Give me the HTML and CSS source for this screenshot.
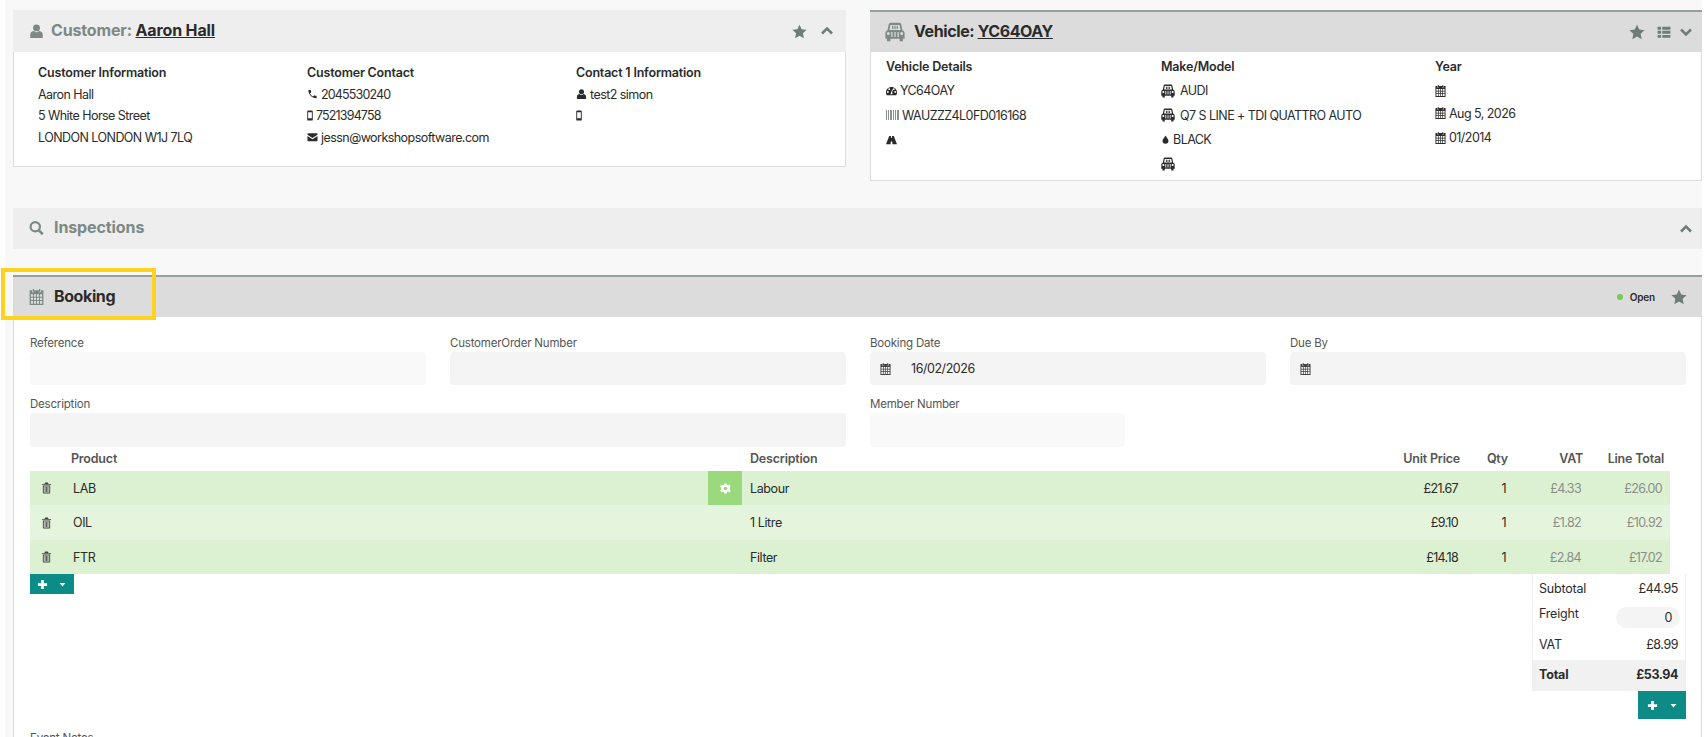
FILE: index.html
```html
<!DOCTYPE html>
<html lang="en">

<head>
    <meta charset="UTF-8">
    <title>Booking</title>
    <link rel="stylesheet" href="styles.css">
</head>

<body>
    <svg class="sprite" width="0" height="0">
        <symbol id="i-user" viewBox="0 0 24 24"><circle cx="12" cy="7" r="5.500" /><path d="M2 23v-5c0-4 3-6 6-6 1 1 2.500 2 4 2s3-1 4-2c3 0 6 2 6 6v5z" /></symbol>
        <symbol id="i-star" viewBox="0 0 24 24"><path d="M12 1l3.400 7.300 7.900 1-5.800 5.500 1.500 7.900-7-3.900-7 3.900 1.500-7.900L.7 9.300l7.900-1z" /></symbol>
        <symbol id="i-up" viewBox="0 0 24 24"><path d="M2 17l10-10 10 10" fill="none" stroke="currentColor" stroke-width="5" /></symbol>
        <symbol id="i-down" viewBox="0 0 24 24"><path d="M2 7l10 10 10-10" fill="none" stroke="currentColor" stroke-width="5" /></symbol>
        <symbol id="i-search" viewBox="0 0 24 24"><circle cx="10" cy="10" r="7.500" fill="none" stroke="currentColor" stroke-width="3.500" /><path d="M15 15l7 7" stroke="currentColor" stroke-width="4" /></symbol>
        <symbol id="i-cal" viewBox="0 0 24 24" preserveAspectRatio="none"><path d="M6 0h2v4H6zM16 0h2v4h-2zM1 2h4v3h3V2h8v3h3V2h4v22H1zM3 8v3.500h3.500V8zm5 0v3.500h3.250V8zm4.750 0v3.500H16V8zm4.750 0v3.500H21V8zM3 13v3.500h3.500V13zm5 0v3.500h3.250V13zm4.750 0v3.500H16V13zm4.750 0v3.500H21V13zM3 18v4h3.500v-4zm5 0v4h3.250v-4zm4.750 0v4H16v-4zm4.750 0v4H21v-4z" fill-rule="evenodd" /></symbol>
        <symbol id="i-phone" viewBox="0 0 24 24"><path d="M6.600 10.800c1.400 2.800 3.800 5.100 6.600 6.600l2.200-2.200c.3-.3.700-.4 1-.2 1.100.4 2.300.6 3.600.6.600 0 1 .4 1 1V20c0 .6-.4 1-1 1C10.600 21 3 13.400 3 4c0-.6.4-1 1-1h3.500c.6 0 1 .4 1 1 0 1.300.2 2.500.6 3.600.1.300 0 .7-.2 1z" /></symbol>
        <symbol id="i-mobile" viewBox="6 0 12 24"><path d="M8 1h8a2 2 0 0 1 2 2v18a2 2 0 0 1-2 2H8a2 2 0 0 1-2-2V3a2 2 0 0 1 2-2zm0 4v13h8V5z" fill-rule="evenodd" /></symbol>
        <symbol id="i-mail" viewBox="0 0 24 24"><path d="M1 6a2 2 0 0 1 2-2h18a2 2 0 0 1 2 2v1l-11 7L1 7zM1 10l11 7 11-7v9a2 2 0 0 1-2 2H3a2 2 0 0 1-2-2z" /></symbol>
        <symbol id="i-car" viewBox="0 0 24 24"><path d="M7 1h10c1.200 0 2.200.8 2.500 2L21 10c1.500.5 2.500 2 2.500 3.500V20h-2v3h-4v-3h-11v3h-4v-3h-2v-6.500C.5 12 1.500 10.500 3 10l1.500-7C4.800 1.800 5.800 1 7 1zm-.5 2.500L5.300 9.500h13.400l-1.200-6zM4 12a1.800 1.800 0 1 0 0 3.600A1.800 1.800 0 0 0 4 12zm16 0a1.800 1.800 0 1 0 0 3.600 1.800 1.800 0 0 0 0-3.600zM7.500 12v6H9v-6zm3.750 0v6h1.500v-6zm3.750 0v6h1.500v-6zM8.500 4.500h1.500v4H8.500zm2.750 0h1.500v4h-1.500zm2.750 0h1.500v4H14z" fill-rule="evenodd" /></symbol>
        <symbol id="i-gauge" viewBox="0 0 24 24"><path d="M12 3C5.400 3 0 8.400 0 15c0 2.200.6 4.300 1.700 6h20.600c1.100-1.700 1.700-3.800 1.700-6 0-6.600-5.400-12-12-12zM4 16a2 2 0 1 1 0-4 2 2 0 0 1 0 4zm3-6a2 2 0 1 1 0-4 2 2 0 0 1 0 4zm7 9h-4l1-4 3-7 1 1-1.500 6.500c.5.800.5 2 .5 3.500zm3-9a2 2 0 1 1 0-4 2 2 0 0 1 0 4zm3 6a2 2 0 1 1 0-4 2 2 0 0 1 0 4z" fill-rule="evenodd" /></symbol>
        <symbol id="i-barcode" viewBox="0 0 13 12"><path d="M0 1h1v10H0zM2 1h1v10H2zM4 1h2v10H4zM7 1h1v10H7zM9 1h1v10H9zM11 1h2v10h-2z" /></symbol>
        <symbol id="i-road" viewBox="0 0 24 24"><path d="M7 3h4l-.3 4h2.600L13 3h4l7 18H14l-.4-6h-3.200L10 21H0z" /></symbol>
        <symbol id="i-tint" viewBox="0 0 24 24"><path d="M12 1c2 5 8 9 8 14.500A8 8 0 0 1 4 15.500C4 10 10 6 12 1z" /></symbol>
        <symbol id="i-trash" viewBox="0 0 24 24"><path d="M9 0h6l1.500 3H22v2H2V3h5.500zM4 6.500h16V22a2 2 0 0 1-2 2H6a2 2 0 0 1-2-2zM6 8.500V22h12V8.500zM8 10h1.800v10.500H8zm3.100 0h1.800v10.500h-1.800zm3.100 0H16v10.500h-1.800z" fill-rule="evenodd" /></symbol>
        <symbol id="i-cog" viewBox="0 0 24 24"><path d="M9.500 1h5l.7 3.500 2.300 1 3-2 3 4-2.500 2.500.5 2-.5 2 2.500 2.500-3 4-3-2-2.300 1-.7 3.500h-5l-.7-3.500-2.300-1-3 2-3-4L2.500 14 2 12l.5-2L0 7.500l3-4 3 2 2.800-1zM12 8a4 4 0 1 0 0 8 4 4 0 0 0 0-8z" fill-rule="evenodd" /></symbol>
        <symbol id="i-plus" viewBox="0 0 24 24"><path d="M9 2h6v7h7v6h-7v7H9v-7H2V9h7z" /></symbol>
        <symbol id="i-caret" viewBox="0 0 24 24"><path d="M4 8h16l-8 9z" /></symbol>
        <symbol id="i-list" viewBox="0 0 24 24"><path d="M1 3h6v5H1zM9 3h14v5H9zM1 10h6v5H1zM9 10h14v5H9zM1 17h6v5H1zM9 17h14v5H9z" /></symbol>
    </svg>

    <div class="page">
        <div class="top">
            <section class="panel customer">
                <div class="head">
                    <svg class="ic-head"><use href="#i-user" /></svg>
                    <h2>Customer: <a>Aaron Hall</a></h2>
                    <div class="tools">
                        <svg class="ic-star"><use href="#i-star" /></svg>
                        <svg class="ic-chev"><use href="#i-up" /></svg>
                    </div>
                </div>
                <div class="body cols">
                    <ul>
                        <li class="title">Customer Information</li>
                        <li>Aaron Hall</li>
                        <li>5 White Horse Street</li>
                        <li>LONDON LONDON W1J 7LQ</li>
                    </ul>
                    <ul>
                        <li class="title">Customer Contact</li>
                        <li class="tel"><svg class="ic"><use href="#i-phone" /></svg>2045530240</li>
                        <li class="tel"><svg class="ic thin"><use href="#i-mobile" /></svg>7521394758</li>
                        <li><svg class="ic"><use href="#i-mail" /></svg>jessn@workshopsoftware.com</li>
                    </ul>
                    <ul>
                        <li class="title">Contact 1 Information</li>
                        <li><svg class="ic"><use href="#i-user" /></svg>test2 simon</li>
                        <li><svg class="ic thin"><use href="#i-mobile" /></svg></li>
                    </ul>
                </div>
            </section>

            <section class="panel active vehicle">
                <div class="head">
                    <svg class="ic-car"><use href="#i-car" /></svg>
                    <h2>Vehicle: <a>YC64OAY</a></h2>
                    <div class="tools">
                        <svg class="ic-star"><use href="#i-star" /></svg>
                        <svg class="ic-list"><use href="#i-list" /></svg>
                        <svg class="ic-chev"><use href="#i-down" /></svg>
                    </div>
                </div>
                <div class="body cols">
                    <ul>
                        <li class="title">Vehicle Details</li>
                        <li><svg class="ic"><use href="#i-gauge" /></svg>YC64OAY</li>
                        <li><svg class="ic bar"><use href="#i-barcode" /></svg>WAUZZZ4L0FD016168</li>
                        <li><svg class="ic"><use href="#i-road" /></svg></li>
                    </ul>
                    <ul>
                        <li class="title">Make/Model</li>
                        <li><svg class="ic wide"><use href="#i-car" /></svg>AUDI</li>
                        <li><svg class="ic wide"><use href="#i-car" /></svg>Q7 S LINE + TDI QUATTRO AUTO</li>
                        <li><svg class="ic small"><use href="#i-tint" /></svg>BLACK</li>
                        <li><svg class="ic wide"><use href="#i-car" /></svg></li>
                    </ul>
                    <ul class="year">
                        <li class="title">Year</li>
                        <li><svg class="ic"><use href="#i-cal" /></svg></li>
                        <li><svg class="ic"><use href="#i-cal" /></svg>Aug 5, 2026</li>
                        <li><svg class="ic"><use href="#i-cal" /></svg>01/2014</li>
                    </ul>
                </div>
            </section>
        </div>

        <section class="panel inspections">
            <div class="head">
                <svg class="ic-head"><use href="#i-search" /></svg>
                <h2>Inspections</h2>
                <div class="tools">
                    <svg class="ic-chev"><use href="#i-up" /></svg>
                </div>
            </div>
        </section>

        <section class="panel active booking">
            <div class="head">
                <svg class="ic-head"><use href="#i-cal" /></svg>
                <h2>Booking</h2>
                <div class="tools">
                    <span class="dot"></span>
                    <span class="status">Open</span>
                    <svg class="ic-star"><use href="#i-star" /></svg>
                </div>
                <div class="highlight"></div>
            </div>
            <div class="body form">
                <div class="fields">
                    <div class="field">
                        <label>Reference</label>
                        <div class="input light"></div>
                    </div>
                    <div class="field">
                        <label>CustomerOrder Number</label>
                        <div class="input"></div>
                    </div>
                    <div class="field">
                        <label>Booking Date</label>
                        <div class="input"><svg class="ic"><use href="#i-cal" /></svg><span class="date">16/02/2026</span></div>
                    </div>
                    <div class="field">
                        <label>Due By</label>
                        <div class="input"><svg class="ic"><use href="#i-cal" /></svg></div>
                    </div>
                    <div class="field span2">
                        <label>Description</label>
                        <div class="input"></div>
                    </div>
                    <div class="field member">
                        <label>Member Number</label>
                        <div class="input light"></div>
                    </div>
                </div>

                <div class="lines">
                    <div class="line line-head">
                        <span></span>
                        <span class="prod">Product</span>
                        <span class="desc">Description</span>
                        <span class="num">Unit Price</span>
                        <span class="num">Qty</span>
                        <span class="num">VAT</span>
                        <span class="num">Line Total</span>
                    </div>
                    <div class="line row">
                        <span class="del"><svg><use href="#i-trash" /></svg></span>
                        <span class="prod">LAB<i class="gear"><svg><use href="#i-cog" /></svg></i></span>
                        <span class="desc">Labour</span>
                        <span class="num">£21.67</span>
                        <span class="num">1</span>
                        <span class="num grey">£4.33</span>
                        <span class="num grey">£26.00</span>
                    </div>
                    <div class="line row alt">
                        <span class="del"><svg><use href="#i-trash" /></svg></span>
                        <span class="prod">OIL</span>
                        <span class="desc">1 Litre</span>
                        <span class="num">£9.10</span>
                        <span class="num">1</span>
                        <span class="num grey">£1.82</span>
                        <span class="num grey">£10.92</span>
                    </div>
                    <div class="line row">
                        <span class="del"><svg><use href="#i-trash" /></svg></span>
                        <span class="prod">FTR</span>
                        <span class="desc">Filter</span>
                        <span class="num">£14.18</span>
                        <span class="num">1</span>
                        <span class="num grey">£2.84</span>
                        <span class="num grey">£17.02</span>
                    </div>
                </div>

                <div class="under">
                    <button class="add small"><svg class="plus"><use href="#i-plus" /></svg><svg class="caret"><use href="#i-caret" /></svg></button>
                    <div class="summary">
                        <div class="totals">
                            <div class="t-row sub"><span>Subtotal</span><span>£44.95</span></div>
                            <div class="t-row freight"><span>Freight</span><span class="pill">0</span></div>
                            <div class="t-row vat"><span>VAT</span><span>£8.99</span></div>
                            <div class="t-row total"><span>Total</span><span>£53.94</span></div>
                        </div>
                        <button class="add big"><svg class="plus"><use href="#i-plus" /></svg><svg class="caret"><use href="#i-caret" /></svg></button>
                    </div>
                </div>

                <label class="notes">Event Notes</label>
            </div>
        </section>
    </div>
</body>

</html>
```

FILE: styles.css
```css
* {
    margin: 0;
    padding: 0;
    list-style: none;
    box-sizing: border-box;
}

html,
body {
    height: 737px;
    overflow: hidden;
}

body {
    background-color: #fff;
    font-family: "Inter", "Liberation Sans", sans-serif;
    font-size: 12.5px;
    letter-spacing: -0.2px;
    color: #2b2b2b;
}

svg {
    fill: currentColor;
}

.sprite {
    position: absolute;
}

.page {
    height: 737px;
    margin: 0 3px 0 5px;
    padding: 10px 0 0 8px;
    background-color: #f8f8f8;
}

.top {
    display: grid;
    grid-template-columns: 833px 832px;
    column-gap: 24px;
    align-items: start;
}

.panel {
    background-color: #fff;
}

.head {
    position: relative;
    display: flex;
    align-items: center;
    height: 42px;
    padding-left: 16px;
    background-color: #eee;
    color: #7c8985;
}

.head h2 {
    margin: 0 0 2px 10px;
    font-size: 16px;
    font-weight: 700;
    letter-spacing: -0.4px;
    white-space: pre;
}

.head a {
    color: #2b2b2b;
    text-decoration: underline;
}

.active .head {
    border-top: 2px solid #95a29c;
    background-color: #dcdcdc;
}

.active .head h2 {
    color: #2b2b2b;
}

.tools {
    display: flex;
    align-items: center;
    margin-left: auto;
    color: #6f7c78;
}

.ic-head {
    width: 15px;
    height: 16px;
    margin-bottom: 1px;
}

.ic-car {
    width: 20px;
    height: 20px;
}

.ic-star {
    width: 16px;
    height: 16px;
}

.ic-chev {
    width: 12px;
    height: 12px;
    margin-left: 14px;
}

.ic-list {
    width: 14px;
    height: 14px;
    margin-left: 12px;
}

.ic-list + .ic-chev {
    margin-left: 9px;
}

.body {
    border: 1px solid #ddd;
    border-top: 0;
}

.cols {
    display: grid;
}

.cols li {
    display: flex;
    align-items: center;
    height: 21.500px;
    letter-spacing: -0.55px;
    white-space: nowrap;
}

.cols .title {
    font-weight: 600;
    letter-spacing: -0.2px;
}

.cols .tel {
    letter-spacing: -0.85px;
}

.ic {
    flex: none;
    width: 11px;
    height: 12px;
    margin-right: 3px;
    color: #2b2b2b;
}

.ic.thin {
    width: 6px;
    height: 11px;
    margin-right: 3px;
}

.ic.wide {
    width: 14px;
    height: 14px;
    margin-right: 5px;
}

.ic.small {
    width: 9px;
    height: 11px;
}

.ic.bar {
    width: 13px;
    color: #8a9290;
}

/* customer */
.customer .tools {
    padding-right: 13px;
}

.customer .ic-star {
    width: 15px;
    height: 15px;
}

.customer .cols {
    grid-template-columns: 269px 269px 1fr;
    height: 115px;
    padding: 10px 0 0 24px;
}

.customer h2 {
    margin-bottom: 3px;
    margin-left: 7px;
    letter-spacing: -0.15px;
}

/* vehicle */
.vehicle .head {
    padding-left: 15px;
}

.vehicle .tools {
    padding-right: 10px;
}

.vehicle h2 {
    margin-left: 9px;
}

.vehicle .cols {
    grid-template-columns: 275px 274px 1fr;
    height: 129px;
    padding: 3px 0 0 15px;
}

.vehicle .cols li {
    height: 24.500px;
}

.vehicle .cols .title {
    height: 23.500px;
}

.year li:nth-child(3) {
    margin-top: -2px;
}

/* inspections */
.inspections {
    margin-top: 27px;
}

.inspections .head {
    height: 41px;
}

.inspections h2 {
    margin-bottom: 3px;
    letter-spacing: -0.1px;
}

.inspections .tools {
    padding-right: 10px;
}

/* booking */
.booking {
    margin-top: 26px;
}

.booking .tools {
    padding-right: 15px;
}

.dot {
    width: 6px;
    height: 6px;
    border-radius: 50%;
    margin-right: 7px;
    background-color: #76cc55;
}

.status {
    margin-right: 16px;
    font-size: 10px;
    font-weight: 600;
    color: #2b2b2b;
}

.highlight {
    position: absolute;
    left: -12px;
    top: -9px;
    width: 155px;
    height: 52px;
    border: 4px solid #ffd21e;
}

.form {
    padding: 17px 15px 0 16px;
}

.fields {
    display: grid;
    grid-template-columns: repeat(4, 1fr);
    column-gap: 24px;
    row-gap: 10px;
}

.field label {
    display: block;
    height: 18px;
    line-height: 18px;
    font-size: 11.500px;
    color: #555;
}

.input {
    display: flex;
    align-items: center;
    height: 33px;
    padding-left: 10px;
    border-radius: 4px;
    background-color: #f4f4f4;
    letter-spacing: -0.45px;
}

.input.light {
    background-color: #f9f9f9;
}

.span2 .input,
.member .input {
    height: 34px;
}

.input .ic {
    color: #444;
}

.date {
    margin-left: 17px;
}

.span2 {
    grid-column: span 2;
}

.member {
    width: 255px;
}

/* lines table */
.line {
    display: grid;
    grid-template-columns: 42px 678px 1fr 90px 48px 75px 81px;
    align-items: center;
    width: 1640px;
}

.line-head {
    height: 24px;
    padding-bottom: 2px;
    font-weight: 600;
    color: #555;
}

.line-head .num {
    padding-right: 6px;
    letter-spacing: -0.2px;
}

.row {
    height: 34px;
    background-color: #dcf0d2;
    letter-spacing: -0.4px;
}

.row.alt {
    height: 35px;
    background-color: #e5f4dc;
}

.prod {
    position: relative;
    display: flex;
    align-items: center;
    height: 100%;
}

.row .prod {
    padding-left: 1px;
}

.line-head .prod {
    margin-left: -1px;
}

.num {
    padding-right: 8px;
    letter-spacing: -0.65px;
    text-align: right;
}

.grey {
    color: #8b8f8a;
}

.del {
    display: flex;
    justify-content: center;
    padding-right: 9px;
}

.del svg {
    width: 11px;
    height: 12px;
    color: #444;
}

.gear {
    position: absolute;
    right: 8px;
    top: 0;
    display: flex;
    align-items: center;
    justify-content: center;
    width: 34px;
    height: 100%;
    background-color: #9bd97d;
    color: #fff;
}

.gear svg {
    width: 11px;
    height: 11px;
}

.under {
    display: flex;
    justify-content: space-between;
    align-items: flex-start;
}

.add {
    display: flex;
    align-items: center;
    justify-content: space-between;
    border: 0;
    background-color: #0d8b87;
    color: #fff;
}

.add.small {
    width: 44px;
    height: 20px;
    padding: 0 7px;
}

.add.big {
    width: 48px;
    height: 28px;
    padding: 0 8px 0 9px;
}

.plus {
    width: 11px;
    height: 11px;
}

.caret {
    width: 9px;
    height: 9px;
}

.summary {
    display: flex;
    flex-direction: column;
    align-items: flex-end;
    width: 154px;
}

.totals {
    width: 154px;
    border-right: 1px solid #eee;
    border-left: 1px solid #eee;
}

.t-row {
    display: flex;
    justify-content: space-between;
    padding: 0 7px 0 6px;
}

.t-row span:last-child {
    letter-spacing: -0.45px;
}

.sub {
    align-items: center;
    height: 29px;
}

.freight {
    height: 27px;
    padding-right: 5px;
}

.freight .pill {
    width: 64px;
    height: 21px;
    margin-top: 4px;
    padding-right: 8px;
    border-radius: 11px;
    background-color: #f4f4f4;
    line-height: 21px;
    text-align: right;
}

.freight span:first-child {
    margin-top: 3px;
}

.vat {
    align-items: center;
    height: 30px;
    padding-bottom: 2px;
}

.total {
    align-items: center;
    height: 31px;
    padding-bottom: 2px;
    background-color: #f1f1f1;
    font-weight: 700;
}

.notes {
    display: block;
    margin-top: 12px;
    font-size: 11.500px;
    color: #555;
}
```
